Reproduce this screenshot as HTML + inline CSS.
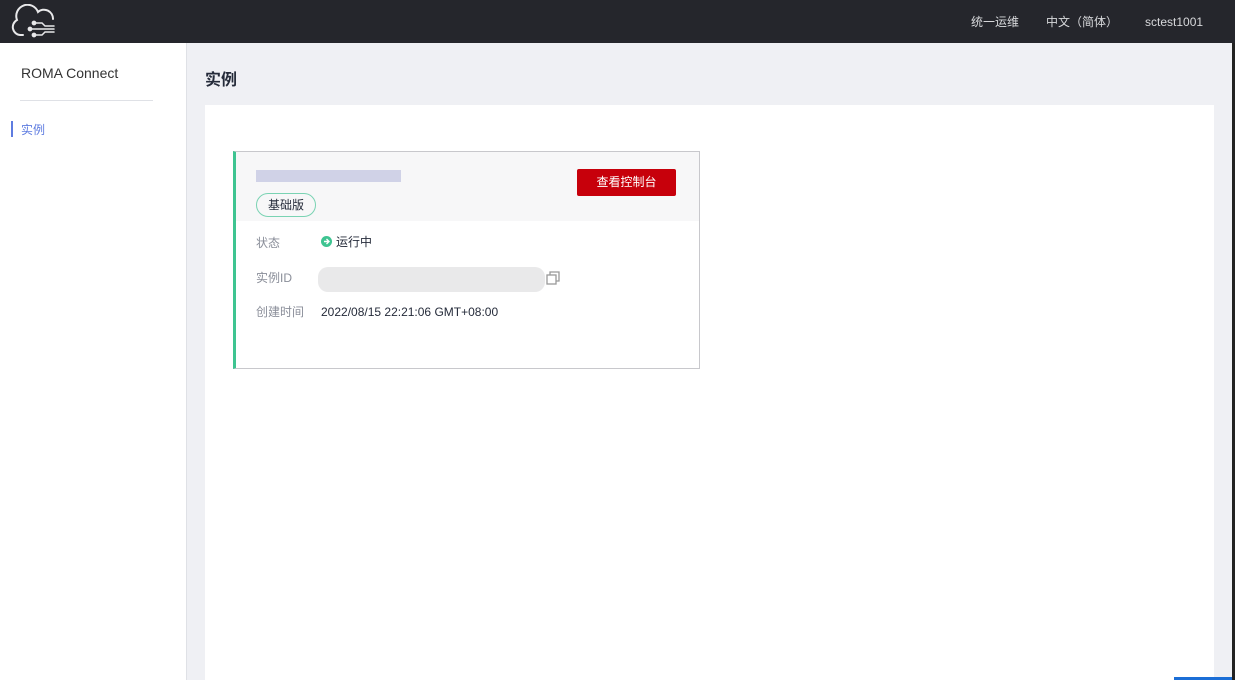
<!DOCTYPE html>
<html><head><meta charset="utf-8"><style>
*{margin:0;padding:0;box-sizing:border-box}
body{width:1235px;height:680px;overflow:hidden;background:#eff0f4;font-family:"Liberation Sans","Noto Sans CJK SC",sans-serif;position:relative;font-size:12px;color:#252b3a}
.top{position:absolute;left:0;top:0;width:1235px;height:43px;background:#25262c}
.top span{position:absolute;top:14px;line-height:16px;color:#d8d9dc;font-size:12px}
.side{position:absolute;left:0;top:43px;width:187px;height:637px;background:#fff;border-right:1px solid #dfe1e6}
.panel{position:absolute;left:205px;top:105px;width:1009px;height:575px;background:#fff}
.card{position:absolute;left:233px;top:151px;width:467px;height:218px;border:1px solid #c8c8cc;border-left:3px solid #3ec491;background:#fff}
.hd{height:69px;background:#f7f7f8}
.lbl{position:absolute;left:20px;color:#8a8e99;line-height:16px}
.val{position:absolute;left:85px;color:#252b3a;line-height:16px}
</style></head><body>
<div class="top">
<svg style="position:absolute;left:11px;top:4px" width="48" height="34" viewBox="0 0 48 34" fill="none" stroke="#e8e8ea" stroke-width="2" stroke-linecap="round">
<path d="M12 31 H9 A8 8 0 0 1 6 16 A11 11 0 0 1 27 8 A9 9 0 0 1 42 15"/>
<path d="M24 19 H31 L34 22 H43" stroke-width="1.5"/><path d="M20 25 H43" stroke-width="1.5"/><path d="M24 31 H31 L34 28 H43" stroke-width="1.5"/>
<circle cx="23" cy="19" r="1.4" fill="#e8e8ea"/><circle cx="19" cy="25" r="1.4" fill="#e8e8ea"/><circle cx="23" cy="31" r="1.4" fill="#e8e8ea"/>
</svg>
<span style="left:971px">统一运维</span><span style="left:1046px">中文（简体）</span><span style="left:1145px">sctest1001</span>
</div>
<div style="position:absolute;left:1232px;top:43px;width:3px;height:637px;background:#222"></div>
<div class="side">
<div style="position:absolute;left:21px;top:22px;font-size:14px;color:#333">ROMA Connect</div>
<div style="position:absolute;left:20px;top:57px;width:133px;height:1px;background:#dfe1e6"></div>
<div style="position:absolute;left:11px;top:78px;width:2px;height:16px;background:#5e7ce0"></div>
<div style="position:absolute;left:21px;top:79px;color:#5e7ce0;line-height:16px">实例</div>
</div>
<div style="position:absolute;left:205px;top:66px;font-size:16px;font-weight:bold;color:#252b3a">实例</div>
<div class="panel"></div>
<div class="card">
<div class="hd"></div>
<div style="position:absolute;left:20px;top:18px;width:145px;height:12px;background:#c9cbe4;opacity:.85"></div>
<div style="position:absolute;left:20px;top:41px;width:60px;height:24px;border:1px solid #7ad3b3;border-radius:12px;text-align:center;line-height:22px;color:#252b3a">基础版</div>
<div style="position:absolute;left:341px;top:17px;width:99px;height:27px;background:#c7000b;border-radius:2px;color:#fff;text-align:center;line-height:27px">查看控制台</div>
<div class="lbl" style="top:83px">状态</div>
<div class="val" style="top:82px"><span style="display:inline-block;width:11px;height:11px;border-radius:50%;background:#3ec491;vertical-align:-1px;margin-right:4px;position:relative"><svg width="11" height="11" style="position:absolute;left:0;top:0" viewBox="0 0 11 11" fill="none" stroke="#fff" stroke-width="1.4"><path d="M3 5.5H8M5.5 3L8 5.5L5.5 8"/></svg></span>运行中</div>
<div class="lbl" style="top:118px">实例ID</div>
<div style="position:absolute;left:82px;top:115px;width:227px;height:25px;background:#e9e9ea;border-radius:10px"></div>
<svg style="position:absolute;left:310px;top:119px" width="14" height="14" viewBox="0 0 14 14" fill="none" stroke="#999" stroke-width="1.3"><rect x="1" y="4" width="9" height="9"/><path d="M4 4V1H13V10H10"/></svg>
<div class="lbl" style="top:152px">创建时间</div>
<div class="val" style="top:152px">2022/08/15 22:21:06 GMT+08:00</div>
</div>
<div style="position:absolute;left:1174px;top:677px;width:58px;height:3px;background:#1b6ed6"></div>
</body></html>
